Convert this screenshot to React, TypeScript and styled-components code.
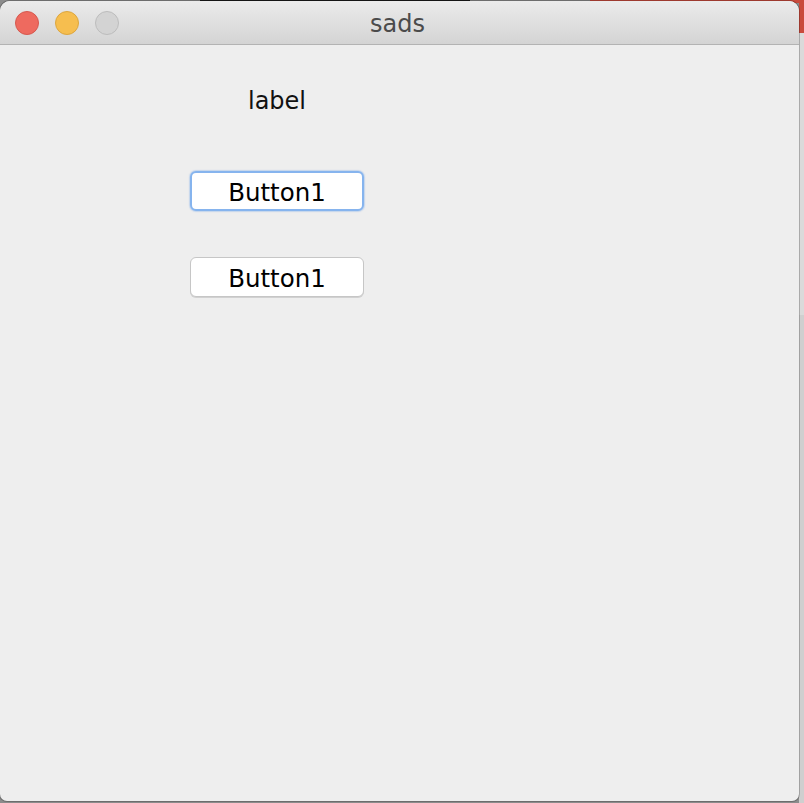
import React from 'react'
import styled, { createGlobalStyle } from 'styled-components'

const GlobalStyle = createGlobalStyle`
  html, body {
    margin: 0;
    padding: 0;
    overflow: hidden;
  }
  body {
    font-family: "DejaVu Sans", "Liberation Sans", sans-serif;
  }
`

const Desktop = styled.div`
  width: 804px;
  height: 803px;
  padding-top: 1px;
  box-sizing: border-box;
  background:
    linear-gradient(#1a1a1a, #1a1a1a) 200px 0 / 270px 2px no-repeat,
    linear-gradient(#c94a3c, #c94a3c) 590px 0 / 214px 3px no-repeat,
    linear-gradient(#c94a3c, #c94a3c) 799px 0 / 5px 33px no-repeat,
    linear-gradient(#dadada, #dadada) 799px 33px / 5px 282px no-repeat,
    linear-gradient(#cfcfcf, #cfcfcf) 799px 315px / 5px 488px no-repeat,
    #8c8c8c;
`

const Window = styled.div`
  width: 799px;
  height: 800px;
  display: flex;
  flex-direction: column;
  border-radius: 10px 10px 7px 7px;
  overflow: hidden;
  background: #eeeeee;
  box-shadow: 0 0 0 1px rgba(0, 0, 0, 0.22);
`

const TitleBar = styled.div`
  position: relative;
  height: 43px;
  flex: none;
  display: flex;
  align-items: center;
  justify-content: center;
  background: linear-gradient(#ebebeb, #d4d4d4);
  border-bottom: 1px solid #b3b3b3;
`

const Lights = styled.div`
  position: absolute;
  left: 15px;
  top: 10px;
  display: flex;
  gap: 16px;
`

const Light = styled.span<{ fill: string; edge: string }>`
  width: 22px;
  height: 22px;
  border-radius: 50%;
  background: ${({ fill }) => fill};
  border: 1px solid ${({ edge }) => edge};
`

const Title = styled.div`
  font-size: 24px;
  line-height: 28px;
  color: #4b4b4b;
  margin-left: -4px;
  padding-top: 2px;
`

const Content = styled.div`
  flex: 1;
  padding: 42px 0 0 190px;
`

const Column = styled.div`
  width: 174px;
  display: flex;
  flex-direction: column;
  align-items: center;
`

const Label = styled.div`
  font-size: 24px;
  line-height: 28px;
  color: #111;
  margin-bottom: 56px;
`

const Button = styled.button<{ focused?: boolean }>`
  width: 174px;
  height: 40px;
  box-sizing: border-box;
  margin-bottom: 46px;
  padding: 3px 0 0;
  font-family: "DejaVu Sans", "Liberation Sans", sans-serif;
  font-size: 24.5px;
  line-height: 28px;
  color: #000;
  background: #fff;
  border-radius: 6px;
  border: ${({ focused }) => (focused ? '2px solid #86b4ee' : '1px solid #c6c6c6')};
  box-shadow: ${({ focused }) =>
    focused ? '0 0 1px 1px rgba(120, 170, 235, 0.35)' : '0 1px 0 rgba(0, 0, 0, 0.12)'};
  outline: none;
`

export default function App() {
  return (
    <Desktop>
      <GlobalStyle />
      <Window>
        <TitleBar>
          <Lights>
            <Light fill="#ee6a5f" edge="#d5594f" />
            <Light fill="#f6be4f" edge="#dca63f" />
            <Light fill="#d3d3d3" edge="#bcbcbc" />
          </Lights>
          <Title>sads</Title>
        </TitleBar>
        <Content>
          <Column>
            <Label>label</Label>
            <Button focused>Button1</Button>
            <Button>Button1</Button>
          </Column>
        </Content>
      </Window>
    </Desktop>
  )
}
